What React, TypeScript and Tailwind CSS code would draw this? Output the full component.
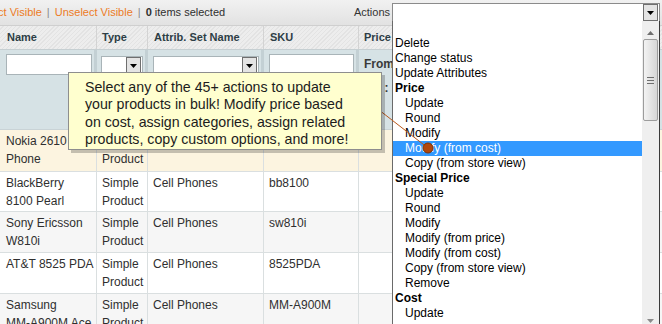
import React from 'react';

const cols = 'grid grid-cols-[97px_51px_116px_95px_1fr]';

const rows = [
  { name: ['Nokia 2610', 'Phone'], type: ['Simple', 'Product'], set: 'Cell Phones', sku: 'nokia2610', bg: 'bg-[#fcf4e0]', h: 'h-[42px]' },
  { name: ['BlackBerry', '8100 Pearl'], type: ['Simple', 'Product'], set: 'Cell Phones', sku: 'bb8100', bg: 'bg-white', h: 'h-[40px]' },
  { name: ['Sony Ericsson', 'W810i'], type: ['Simple', 'Product'], set: 'Cell Phones', sku: 'sw810i', bg: 'bg-[#f6f6f6]', h: 'h-[41px]' },
  { name: ['AT&T 8525 PDA'], type: ['Simple', 'Product'], set: 'Cell Phones', sku: '8525PDA', bg: 'bg-white', h: 'h-[41px]' },
  { name: ['Samsung', 'MM-A900M Ace'], type: ['Simple', 'Product'], set: 'Cell Phones', sku: 'MM-A900M', bg: 'bg-[#f6f6f6]', h: 'h-[41px]' },
];

const options: { label: string; kind: 'item' | 'group' | 'sub' | 'blank'; active?: boolean }[] = [
  { label: '', kind: 'blank' },
  { label: 'Delete', kind: 'item' },
  { label: 'Change status', kind: 'item' },
  { label: 'Update Attributes', kind: 'item' },
  { label: 'Price', kind: 'group' },
  { label: 'Update', kind: 'sub' },
  { label: 'Round', kind: 'sub' },
  { label: 'Modify', kind: 'sub' },
  { label: 'Modify (from cost)', kind: 'sub', active: true },
  { label: 'Copy (from store view)', kind: 'sub' },
  { label: 'Special Price', kind: 'group' },
  { label: 'Update', kind: 'sub' },
  { label: 'Round', kind: 'sub' },
  { label: 'Modify', kind: 'sub' },
  { label: 'Modify (from price)', kind: 'sub' },
  { label: 'Modify (from cost)', kind: 'sub' },
  { label: 'Copy (from store view)', kind: 'sub' },
  { label: 'Remove', kind: 'sub' },
  { label: 'Cost', kind: 'group' },
  { label: 'Update', kind: 'sub' },
];

function SelectArrow() {
  return (
    <span className="flex h-[17px] w-[15px] items-center justify-center border border-[#6f6f6f] bg-[#e4e4e4]">
      <svg width="7" height="4" viewBox="0 0 7 4">
        <path d="M0 0h7L3.5 4z" fill="#000" />
      </svg>
    </span>
  );
}

export default function App() {
  return (
    <div className="relative h-[324px] w-[662px] overflow-hidden bg-white font-['Liberation_Sans',Arial,sans-serif] text-[12px] text-[#2f2f2f]">
      {/* massaction bar */}
      <div className="flex h-[26px] items-center justify-between overflow-hidden border-b border-[#cfcfcf] bg-gradient-to-b from-[#f1f1f1] to-[#e2e2e2] text-[11px]">
        <div className="flex items-center whitespace-nowrap">
          <span className="-ml-[24px] text-[#ec7b26]">Select Visible</span>
          <span className="mx-[5px] text-[#8a8a8a]">|</span>
          <span className="text-[#ec7b26]">Unselect Visible</span>
          <span className="mx-[5px] text-[#8a8a8a]">|</span>
          <span>
            <b>0</b> items selected
          </span>
        </div>
        <div className="mr-[2px] flex items-center">
          <span className="mr-[2px] text-[#333]">Actions</span>
          <div className="flex h-[20px] w-[268px] items-center justify-end border border-[#8b8b8b] bg-white pr-[1px]">
            <SelectArrow />
          </div>
        </div>
      </div>

      {/* headings */}
      <div className={`${cols} h-[24px] border-b border-[#c6cfd2] bg-[repeating-linear-gradient(135deg,#ededed_0px,#ededed_2px,#e3e3e3_2px,#e3e3e3_3px)] text-[11px] font-bold text-[#2d3e46]`}>
        <div className="flex items-center border-r border-[#d3d3d3] pl-[7px]">Name</div>
        <div className="flex items-center border-r border-[#d3d3d3] pl-[5px]">Type</div>
        <div className="flex items-center border-r border-[#d3d3d3] pl-[6px]">Attrib. Set Name</div>
        <div className="flex items-center border-r border-[#d3d3d3] pl-[6px]">SKU</div>
        <div className="flex items-center pl-[5px]">Price</div>
      </div>

      {/* filters */}
      <div className={`${cols} h-[80px] border-b border-[#c9d3d6] bg-[#d6e2e5]`}>
        <div className="border-r-[3px] border-[#c3d0d4] pl-[6px] pt-[4px]">
          <div className="h-[21px] w-[86px] border border-[#a9b4b8] bg-white" />
        </div>
        <div className="border-r-[3px] border-[#c3d0d4] pl-[4px] pt-[6px]">
          <div className="flex h-[19px] w-[42px] items-center justify-end border border-[#a9b4b8] bg-white pr-[1px]">
            <SelectArrow />
          </div>
        </div>
        <div className="border-r-[3px] border-[#c3d0d4] pl-[5px] pt-[6px]">
          <div className="flex h-[19px] w-[106px] items-center justify-end border border-[#a9b4b8] bg-white pr-[1px]">
            <SelectArrow />
          </div>
        </div>
        <div className="border-r-[3px] border-[#c3d0d4] pl-[5px] pt-[4px]">
          <div className="h-[21px] w-[85px] border border-[#a9b4b8] bg-white" />
        </div>
        <div className="pl-[5px] pt-[2px] font-bold leading-[24px] text-[#3a3a3a]">
          <div>From :</div>
          <div>To&nbsp; :</div>
        </div>
      </div>

      {/* rows */}
      {rows.map((r) => (
        <div key={r.sku} className={`${cols} ${r.h} ${r.bg} border-b border-[#dadfe0] leading-[17.5px]`}>
          <div className="border-r border-[#dadfe0] pl-[6px] pt-[3px] whitespace-nowrap">
            {r.name.map((l) => (
              <div key={l}>{l}</div>
            ))}
          </div>
          <div className="border-r border-[#dadfe0] pl-[5px] pt-[3px]">
            {r.type.map((l) => (
              <div key={l}>{l}</div>
            ))}
          </div>
          <div className="border-r border-[#dadfe0] pl-[5px] pt-[3px]">{r.set}</div>
          <div className="border-r border-[#dadfe0] pl-[5px] pt-[3px]">{r.sku}</div>
          <div />
        </div>
      ))}

      {/* open actions dropdown */}
      <div className="absolute left-[392px] top-[21px] flex h-[310px] w-[268px] border-x border-l-[#6a6a6a] border-r-[#3a3a3a] bg-white">
        <div className="flex-1 leading-[15px] text-black">
          {options.map((o, i) => (
            <div
              key={i}
              className={`h-[15px] whitespace-nowrap ${o.kind === 'group' ? 'pl-[2px] font-bold' : o.kind === 'sub' ? 'pl-[12px]' : 'pl-[2px]'} ${o.active ? 'bg-[#3399ff] text-white' : ''}`}
            >
              {o.label}
            </div>
          ))}
        </div>
        <div className="flex w-[17px] flex-col bg-[#efefef]">
          <div className="flex h-[18px] items-end justify-center pb-[4px]">
            <svg width="7" height="4" viewBox="0 0 7 4">
              <path d="M0 4h7L3.5 0z" fill="#6f6f6f" />
            </svg>
          </div>
          <div className="mx-[1px] flex h-[82px] flex-col items-center justify-center gap-[2px] rounded-[2px] border border-[#9c9c9c] bg-gradient-to-r from-[#f3f3f3] to-[#d6d6d6]">
            <span className="h-px w-[7px] bg-[#6e6e6e]" />
            <span className="h-px w-[7px] bg-[#6e6e6e]" />
            <span className="h-px w-[7px] bg-[#6e6e6e]" />
          </div>
          <div className="flex-1" />
          <div className="flex h-[18px] items-start justify-center pt-[6px]">
            <svg width="7" height="4" viewBox="0 0 7 4">
              <path d="M0 0h7L3.5 4z" fill="#8a8a8a" />
            </svg>
          </div>
        </div>
      </div>

      {/* callout pointer */}
      <svg className="pointer-events-none absolute left-0 top-0" width="662" height="324">
        <line x1="370" y1="103" x2="428" y2="148" stroke="#b8581c" strokeWidth="1" />
        <circle cx="428" cy="148" r="5" fill="#b2470d" stroke="#7c3006" strokeWidth="1" />
      </svg>

      {/* callout */}
      <div className="absolute left-[68px] top-[72px] h-[78px] w-[314px] border border-[#8e8e8e] bg-[#ffffcf] pl-[16px] pt-[6px] text-[14.2px] leading-[17.3px] text-[#1c1c1c] shadow-[3px_3px_0_rgba(0,0,0,0.22)]">
        <div className="whitespace-nowrap">Select any of the 45+ actions to update</div>
        <div className="whitespace-nowrap">your products in bulk! Modify price based</div>
        <div className="whitespace-nowrap">on cost, assign categories, assign related</div>
        <div className="whitespace-nowrap">products, copy custom options, and more!</div>
      </div>
    </div>
  );
}
